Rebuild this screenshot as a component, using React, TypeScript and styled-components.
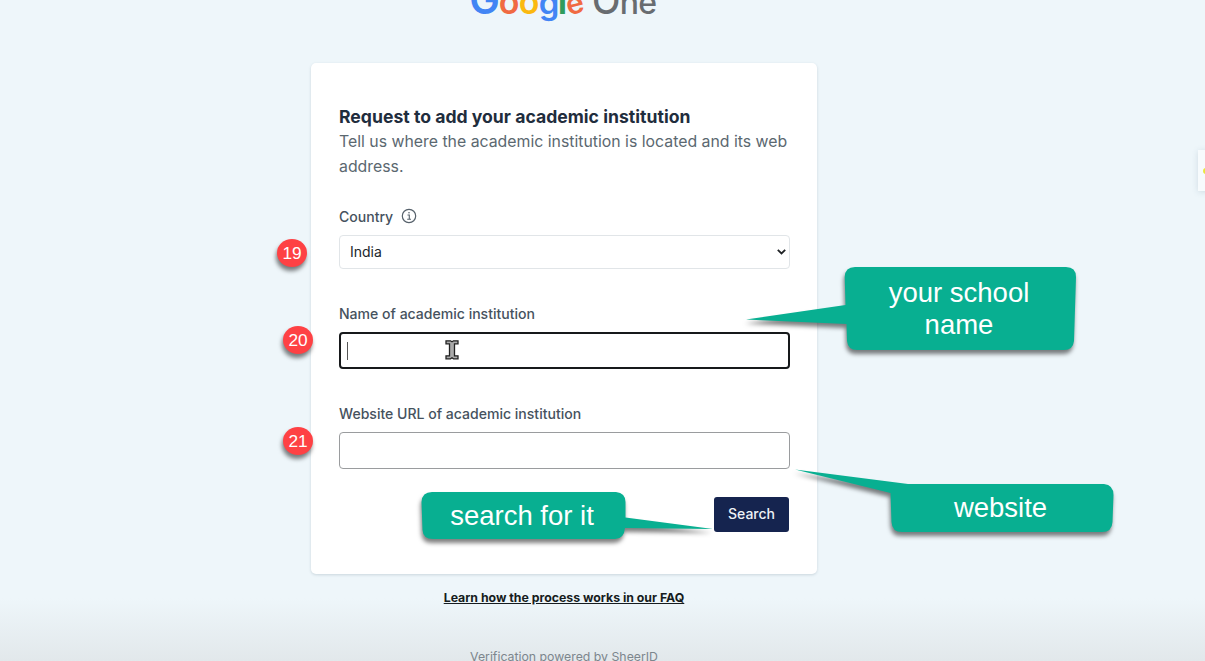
import React from "react";
import styled, { createGlobalStyle } from "styled-components";

const GlobalStyle = createGlobalStyle`
  * { box-sizing: border-box; }
  html, body { margin: 0; padding: 0; overflow: hidden; }
  body { font-family: Inter, "Liberation Sans", sans-serif; }
`;

const Page = styled.main`
  position: relative;
  width: 1205px;
  height: 661px;
  overflow: hidden;
  display: flex;
  flex-direction: column;
  align-items: flex-start;
  padding-left: 311px;
  background: linear-gradient(#eef6fa 0, #eef6fa 598px, #e2e8eb 661px);
`;

const Column = styled.div`
  width: 506px;
  display: flex;
  flex-direction: column;
  align-items: center;
`;

const Logo = styled.svg`
  display: block;
  height: 63px;
  width: 200px;
  font-family: Inter, sans-serif;
`;

const Card = styled.form`
  width: 506px;
  height: 511px;
  padding: 41px 28px 0;
  background: #fff;
  border-radius: 5px;
  box-shadow: 0 1px 3px rgba(60, 90, 110, 0.2);
`;

const Title = styled.h1`
  margin: 0;
  font-size: 17.58px;
  letter-spacing: 0.02px;
  line-height: 25px;
  font-weight: 700;
  color: #1f2d3d;
  white-space: nowrap;
`;

const Intro = styled.p`
  margin: 1px -10px 25px 0;
  font-size: 15.83px;
  line-height: 24.5px;
  color: #5b6870;
`;

const Field = styled.div<{ $gap: number }>`
  display: flex;
  flex-direction: column;
  margin-bottom: ${(p) => p.$gap}px;
`;

const Label = styled.label`
  display: flex;
  align-items: center;
  gap: 8px;
  height: 24px;
  margin-bottom: 7px;
  font-size: 14.06px;
  font-weight: 500;
  color: #46525e;
`;

const SelectBox = styled.div`
  display: flex;
  align-items: center;
  justify-content: space-between;
  width: 451px;
  height: 34px;
  padding: 0 3px 2px 10px;
  border: 1px solid #e1e5e8;
  border-radius: 4px;
  font-size: 14px;
  color: #20262b;
`;

const InputBox = styled.div<{ $focused?: boolean }>`
  display: flex;
  align-items: center;
  width: 450.5px;
  height: 37px;
  padding-left: ${(p) => (p.$focused ? 6 : 7)}px;
  border: ${(p) => (p.$focused ? "2px solid #17191b" : "1px solid #9a9c9e")};
  border-radius: 4px;
  background: #fff;
`;

const Caret = styled.span`
  width: 1px;
  height: 18px;
  background: #555;
`;

const Actions = styled.div`
  display: flex;
  justify-content: flex-end;
`;

const SearchButton = styled.button`
  width: 75px;
  height: 35px;
  padding: 0 0 2px;
  border: 0;
  border-radius: 3px;
  background: #15244f;
  color: #eef1f6;
  font: 500 14px Inter, sans-serif;
`;

const FaqLink = styled.a`
  margin-top: 15px;
  font-size: 12.3px;
  line-height: 17px;
  font-weight: 700;
  color: #161c20;
  text-decoration: underline;
  white-space: nowrap;
`;

const Powered = styled.div`
  margin-top: 43px;
  font-size: 12.3px;
  line-height: 16px;
  color: #7d868d;
  white-space: nowrap;
`;

const Badge = styled.div<{ $x: number; $y: number }>`
  position: absolute;
  left: ${(p) => p.$x}px;
  top: ${(p) => p.$y}px;
  width: 30px;
  height: 28px;
  padding-top: 1px;
  border-radius: 50%;
  display: flex;
  align-items: center;
  justify-content: center;
  background: #fe4144;
  color: #fff;
  font: 17.3px "Liberation Sans", sans-serif;
  box-shadow: -1px 4px 4px rgba(0, 0, 0, 0.5);
`;

const Bubbles = styled.svg`
  position: absolute;
  inset: 0;
  fill: #08af91;
  filter: drop-shadow(-1px 4px 2px rgba(0, 0, 0, 0.5));
`;

const BubbleText = styled.div<{ $x: number; $y: number; $w: number; $h: number }>`
  position: absolute;
  left: ${(p) => p.$x}px;
  top: ${(p) => p.$y}px;
  width: ${(p) => p.$w}px;
  height: ${(p) => p.$h}px;
  display: flex;
  align-items: center;
  justify-content: center;
  text-align: center;
  color: #fff;
  font: 27.5px/32px "Liberation Sans", sans-serif;
`;

const Pointer = styled.svg`
  position: absolute;
  left: 444px;
  top: 339px;
`;

const SideTab = styled.div`
  position: absolute;
  left: 1198px;
  top: 150px;
  width: 12px;
  height: 41px;
  background: #f7fbfd;
  box-shadow: 0 1px 6px rgba(90, 120, 140, 0.2);
  display: flex;
  align-items: center;
  padding-left: 5px;

  &::before {
    content: "";
    width: 6px;
    height: 6px;
    border-radius: 50%;
    background: #e9e63c;
  }
`;

const logoLetters = [
  { ch: "G", x: 469.3, size: 41, fill: "#4285f4" },
  { ch: "o", x: 498.8, size: 34, fill: "#f06a42" },
  { ch: "o", x: 518.8, size: 34, fill: "#fbb90f" },
  { ch: "g", x: 538.8, size: 33, fill: "#4285f4" },
  { ch: "l", x: 557.5, size: 38, fill: "#2f9c5c" },
  { ch: "e", x: 566.2, size: 30, fill: "#f06a42", tilt: true },
  { ch: "O", x: 592, size: 37, fill: "#686c70" },
  { ch: "n", x: 619.7, size: 32, fill: "#686c70" },
  { ch: "e", x: 638.2, size: 32, fill: "#686c70" },
];

export default function App() {
  return (
    <Page>
      <GlobalStyle />
      <Column>
        <Logo viewBox="464 0 200 63" aria-label="Google One">
          {logoLetters.map((l, i) => (
            <text
              key={i}
              x={l.x}
              y={13.7}
              fontSize={l.size}
              fontWeight={i < 6 ? 600 : 500}
              fill={l.fill}
              transform={l.tilt ? "rotate(-14 575 5)" : undefined}
            >
              {l.ch}
            </text>
          ))}
        </Logo>
        <Card>
          <Title>Request to add your academic institution</Title>
          <Intro>
            Tell us where the academic institution is located and its web
            <br />
            address.
          </Intro>
          <Field $gap={32}>
            <Label>
              Country
              <svg width="16" height="16" viewBox="0 0 16 16" fill="none" stroke="#56616b">
                <circle cx="8" cy="8" r="6.7" strokeWidth="1.2" />
                <path d="M6.5 7h1.8v4M6.2 11.2h3.8" strokeWidth="1.1" />
                <circle cx="8" cy="4.8" r=".8" fill="#56616b" stroke="none" />
              </svg>
            </Label>
            <SelectBox>
              India
              <svg width="9" height="7" viewBox="0 0 9 7" fill="none" stroke="#202326" strokeWidth="1.8">
                <path d="M.8 1.9 4.5 5.5 8.2 1.9" />
              </svg>
            </SelectBox>
          </Field>
          <Field $gap={32}>
            <Label>Name of academic institution</Label>
            <InputBox $focused>
              <Caret />
            </InputBox>
          </Field>
          <Field $gap={28}>
            <Label>Website URL of academic institution</Label>
            <InputBox />
          </Field>
          <Actions>
            <SearchButton type="button">Search</SearchButton>
          </Actions>
        </Card>
        <FaqLink>Learn how the process works in our FAQ</FaqLink>
        <Powered>Verification powered by SheerID</Powered>
      </Column>

      <SideTab />
      <Badge $x={277} $y={239}>19</Badge>
      <Badge $x={283} $y={326}>20</Badge>
      <Badge $x={283} $y={427}>21</Badge>

      <Bubbles width="1205" height="661" viewBox="0 0 1205 661">
        <path d="M855 267H1066Q1076 267 1076 277L1074 341Q1073 350 1064 350H857Q848 350 847 341L846.500 324 746 319.500 845.500 305 844.700 277Q845 267 855 267Z" />
        <path d="M795 469.500 908 484H1104Q1113.500 485 1113.500 495L1112.500 522Q1112 532 1102 532H902Q892 532 891.500 522L890.500 493Z" />
        <path d="M432 492H616Q625.500 493 625.500 502V517.500L713 529 625 528Q624 539 615 539H433Q423 539 422.500 530L421.500 502Q422 492 432 492Z" />
      </Bubbles>
      <BubbleText $x={845} $y={267} $w={228} $h={84}>
        your school
        <br />
        name
      </BubbleText>
      <BubbleText $x={890} $y={484} $w={221} $h={48}>website</BubbleText>
      <BubbleText $x={421} $y={492} $w={202} $h={48}>search for it</BubbleText>

      <Pointer width="16" height="22" viewBox="0 0 16 22">
        <path
          d="M2 1.800h4.500l1.500 1 1.500-1H14v3h-3.500v12H14v3H9.500l-1.500-1-1.500 1H2v-3h3.500v-12H2Z"
          fill="#aaa"
          stroke="#222"
          strokeWidth="1.300"
        />
      </Pointer>
    </Page>
  );
}
